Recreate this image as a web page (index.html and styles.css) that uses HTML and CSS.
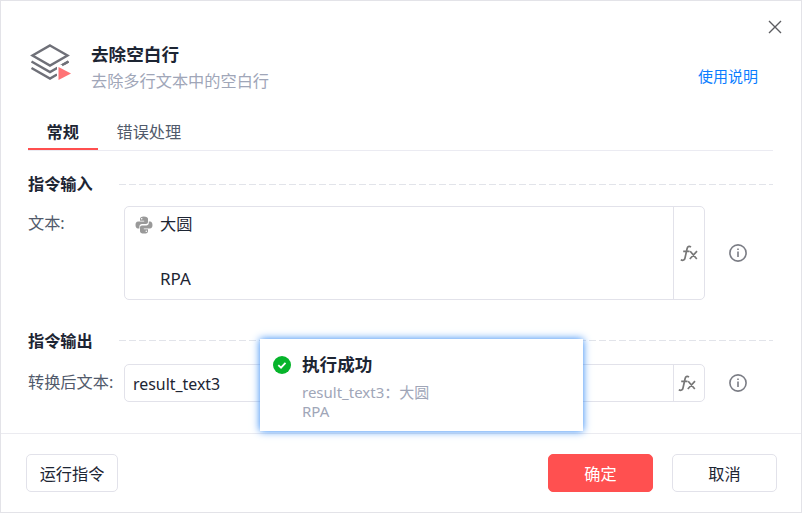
FILE: index.html
```html
<!DOCTYPE html>
<html lang="zh-CN">
<head>
    <meta charset="UTF-8">
    <meta name="viewport" content="width=device-width, initial-scale=1.0">
    <title>去除空白行</title>
    <link rel="stylesheet" href="styles.css">
</head>
<body>

<div class="dialog">
    <div class="header">
        <svg class="header-icon" width="42" height="40" viewBox="0 0 42 40" fill="none" stroke="#6f7078" stroke-width="2.4">
            <path d="M20 4.5 37.5 14.5 20 24.5 2.5 14.5Z"/>
            <path d="M1.5 20.5 20 31 38.5 20.5"/>
            <path d="M1.5 27 20 37.5 27 33.5"/>
            <path d="M27 23.5 42 24.5V40H27Z" fill="#fff" stroke="none"/>
            <path d="M32 24.2 38.5 20.5"/>
            <path d="M28.5 26 41 32.5 28.5 39Z" fill="#ff7376" stroke="none"/>
        </svg>
        <div class="header-text">
            <div class="title">去除空白行</div>
            <div class="subtitle">去除多行文本中的空白行</div>
        </div>
        <a class="help-link">使用说明</a>
    </div>
    <svg class="close" width="14" height="14" viewBox="0 0 14 14" stroke="#5c5d61" stroke-width="1.4">
        <path d="M1 1 13 13M13 1 1 13"/>
    </svg>

    <div class="tabs">
        <div class="tab active">常规</div>
        <div class="tab">错误处理</div>
    </div>

    <div class="section-title section-input"><span>指令输入</span><i class="dash"></i></div>
    <div class="row">
        <label class="label">文本:</label>
        <div class="field area">
            <svg class="python" width="18" height="18" viewBox="0 0 18 18" fill="#999">
                <path d="M8.8.4C6.2.4 5 1.3 5 2.8v2h4.2v.7H3.1C1.4 5.5.5 6.9.5 9s1 3.5 2.4 3.5h1.5v-1.9c0-1.5 1.2-2.5 2.5-2.5H11c1.2 0 2-.9 2-2V2.8C13 1.3 11.5.4 8.8.4Z"/>
                <path d="M9.2 17.6c2.6 0 3.8-.9 3.8-2.4v-2H8.8v-.7h6.1c1.7 0 2.6-1.4 2.6-3.5s-1-3.500-2.4-3.500h-1.3v1.6c0 1.5-1.1 2.5-2.4 2.5H7c-1.200 0-2 .9-2 2v3.600c0 1.500 1.500 2.400 4.200 2.400Z"/>
                <circle cx="6.7" cy="2.7" r=".8" fill="#fff"/>
                <circle cx="11.3" cy="15.3" r=".8" fill="#fff"/>
            </svg>
            <div class="value">大圆<br><br><span class="latin">RPA</span></div>
            <div class="fx">
                <svg width="18" height="17" viewBox="0 0 18 17" fill="none" stroke="#777" stroke-width="1.7">
                    <path d="M11 2C9 .7 7.5 1.5 7 4L5 13C4.6 15 3 16 .8 14.8M3.2 6.3H9.500M10.2 6.3 16.8 14M17 6.2 9.8 14"/>
                </svg>
            </div>
        </div>
        <svg class="info" width="20" height="20" viewBox="0 0 20 20" fill="none" stroke="#7b7d85" stroke-width="1.6">
            <circle cx="10" cy="10" r="8.1"/>
            <path d="M10 8.5V14M10 5.5V7"/>
        </svg>
    </div>

    <div class="section-title section-output"><span>指令输出</span><i class="dash"></i></div>
    <div class="row">
        <label class="label label-output">转换后文本:</label>
        <div class="field">
            <div class="value result">result_text3</div>
            <div class="fx fx-small">
                <svg width="18" height="17" viewBox="0 0 18 17" fill="none" stroke="#777" stroke-width="1.7">
                    <path d="M11 2C9 .7 7.5 1.5 7 4L5 13C4.6 15 3 16 .8 14.8M3.2 6.3H9.5M10.2 6.3 16.8 14M17 6.2 9.8 14"/>
                </svg>
            </div>
        </div>
        <svg class="info" width="20" height="20" viewBox="0 0 20 20" fill="none" stroke="#7b7d85" stroke-width="1.6">
            <circle cx="10" cy="10" r="8.1"/>
            <path d="M10 8.5V14M10 5.5V7"/>
        </svg>
    </div>

    <div class="footer">
        <button class="btn btn-run">运行指令</button>
        <button class="btn btn-ok">确定</button>
        <button class="btn btn-cancel">取消</button>
    </div>

    <div class="toast">
        <svg width="18" height="18" viewBox="0 0 18 18">
            <circle cx="9" cy="9" r="9" fill="#06b42b"/>
            <path d="M5.3 9.2 8 11.7 12.5 6.8" fill="none" stroke="#fff" stroke-width="1.8"/>
        </svg>
        <div>
            <div class="toast-title">执行成功</div>
            <div class="toast-text">result_text3：大圆<br>RPA</div>
        </div>
    </div>
</div>

</body>
</html>
```
FILE: styles.css
```css
* {
    box-sizing: border-box;
}
body {
    margin: 0;
    font-family: "Noto Sans", "Noto Sans CJK SC", sans-serif;
    font-size: 16.2px;
    color: #1d2533;
    background-color: #fff;
}
.dialog {
    position: relative;
    display: flex;
    flex-direction: column;
    width: 802px;
    height: 513px;
    border: 1px solid #e3e3e8;
}
.header {
    display: flex;
    height: 111px;
    padding: 40px 43px 0 29px;
}
.header-icon {
    flex: none;
}
.header-text {
    margin-left: 19px;
}
.title {
    font-size: 17.6px;
    font-weight: bold;
    line-height: 26px;
}
.subtitle {
    line-height: 29px;
    color: #a0a6b8;
}
.help-link {
    margin: 24px 0 0 auto;
    font-size: 15px;
    line-height: 22px;
    color: #0a7dff;
}
.close {
    position: absolute;
    top: 19px;
    right: 19px;
}
.tabs {
    display: flex;
    height: 39px;
    margin: 0 28px 0 27px;
    border-bottom: 1px solid #ebebf2;
}
.tab {
    height: 38px;
    padding: 0 18.5px;
    line-height: 41px;
    color: #515a6b;
    white-space: nowrap;
}
.tab.active {
    width: 70px;
    font-weight: bold;
    color: #1d2533;
    border-bottom: 2px solid #ff4f4f;
}
.section-title {
    display: flex;
    align-items: center;
    height: 24px;
    margin: 0 28px 0 27px;
    font-weight: bold;
}
.section-input {
    margin-top: 21px;
    margin-bottom: 10px;
}
.section-input span {
    padding-bottom: 2px;
}
.section-output {
    margin-top: 28px;
    margin-bottom: 12px;
}
.dash {
    flex: 1;
    height: 1px;
    margin-left: 26px;
    background: repeating-linear-gradient(90deg, #e2e4ea 0 7px, transparent 7px 10px);
}
.row {
    display: flex;
    align-items: center;
    padding-left: 27px;
}
.label {
    align-self: flex-start;
    width: 96px;
    line-height: 34px;
    color: #515a6b;
    white-space: nowrap;
}
.label-output {
    line-height: 37px;
}
.field {
    display: flex;
    width: 581px;
    height: 38px;
    border: 1px solid #e2e2ea;
    border-radius: 5px;
}
.field .value {
    flex: 1;
    padding-left: 8px;
    line-height: 38px;
}
.field .result {
    font-size: 15.9px;
}
.area {
    height: 94px;
}
.python {
    margin: 9px 0 0 10px;
}
.area .value {
    padding: 4px 0 0 7px;
    line-height: 27px;
}
.latin {
    font-size: 17px;
}
.fx {
    display: flex;
    align-items: center;
    justify-content: center;
    width: 31px;
    border-left: 1px solid #e2e2ea;
}
.fx-small {
    padding-right: 5px;
}
.info {
    margin-left: 23px;
}
.footer {
    display: flex;
    flex: 1;
    margin-top: 31px;
    padding: 20px 24px 0 25px;
    border-top: 1px solid #ebebf0;
}
.btn {
    width: 105px;
    height: 38px;
    padding: 0 0 1px;
    font-family: inherit;
    font-size: 16.2px;
    color: #1d2533;
    background-color: #fff;
    border: 1px solid #e2e2ea;
    border-radius: 5px;
}
.btn-run {
    width: 92px;
    margin-right: auto;
}
.btn-ok {
    margin-right: 19px;
    color: #fff;
    background-color: #ff5050;
    border-color: #ff5050;
}
.toast {
    position: absolute;
    top: 338px;
    left: 259px;
    display: flex;
    width: 323px;
    height: 92px;
    padding: 17px 13px;
    background-color: #fff;
    box-shadow: 0 0 8px #2a85f5;
}
.toast > svg {
    margin-right: 11px;
}
.toast-title {
    margin-top: -5px;
    font-size: 17.6px;
    font-weight: bold;
    line-height: 26px;
}
.toast-text {
    margin-top: 6px;
    font-size: 15px;
    line-height: 19px;
    color: #a0a6b8;
}
```
